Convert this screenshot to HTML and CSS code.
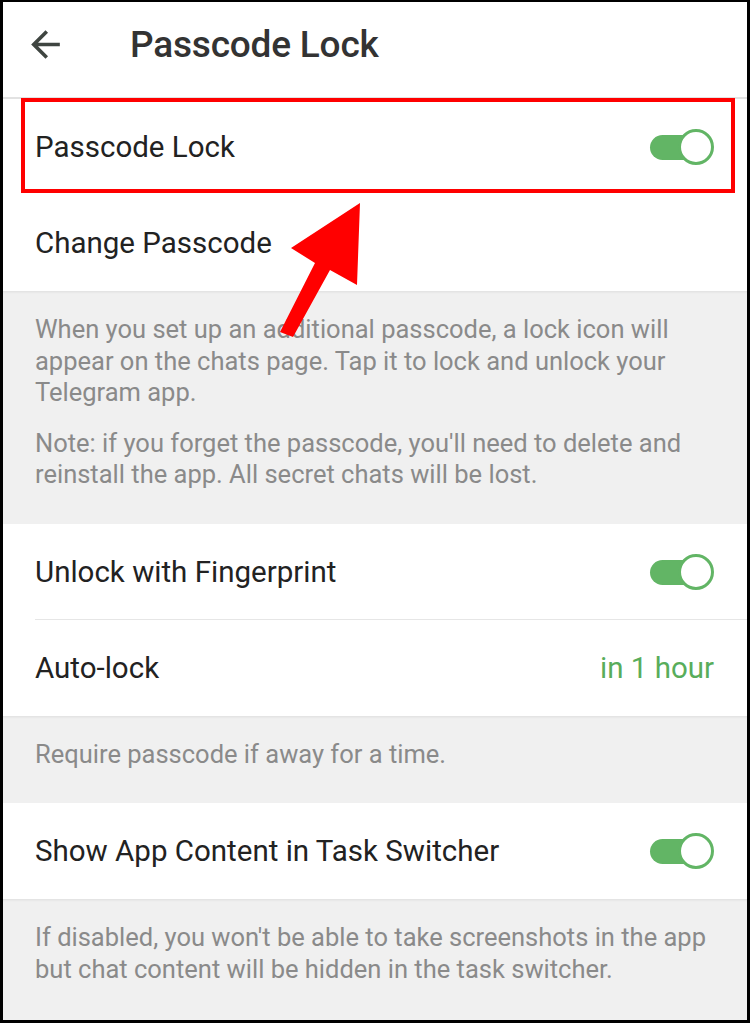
FILE: index.html
```html
<!DOCTYPE html>
<html lang="en">
<head>
    <meta charset="UTF-8">
    <meta name="viewport" content="width=device-width, initial-scale=1.0">
    <title>Passcode Lock</title>
    <link rel="stylesheet" href="styles.css">
</head>
<body>
    <div class="screen">
        <header class="app-bar">
            <button class="back-btn" aria-label="Back">
                <svg viewBox="0 0 24 24" width="43" height="43">
                    <path d="M20 11H7.83l5.59-5.59L12 4l-8 8 8 8 1.41-1.41L7.83 13H20v-2z" fill="#3f4541"/>
                </svg>
            </button>
            <h1 class="title">Passcode Lock</h1>
        </header>

        <div class="rows">
            <div class="row">
                <span class="label">Passcode Lock</span>
                <span class="switch on"></span>
            </div>
            <div class="row">
                <span class="label">Change Passcode</span>
            </div>
        </div>

        <div class="info">
            <p>When you set up an additional passcode, a lock icon will appear on the chats page. Tap it to lock and unlock your Telegram app.</p>
            <p>Note: if you forget the passcode, you'll need to delete and reinstall the app. All secret chats will be lost.</p>
        </div>

        <div class="rows">
            <div class="row divided">
                <span class="label">Unlock with Fingerprint</span>
                <span class="switch on"></span>
            </div>
            <div class="row">
                <span class="label">Auto-lock</span>
                <span class="value">in 1 hour</span>
            </div>
        </div>

        <div class="info">
            <p>Require passcode if away for a time.</p>
        </div>

        <div class="rows">
            <div class="row">
                <span class="label">Show App Content in Task Switcher</span>
                <span class="switch on"></span>
            </div>
        </div>

        <div class="info last">
            <p>If disabled, you won't be able to take screenshots in the app but chat content will be hidden in the task switcher.</p>
        </div>

        <!-- annotation overlay -->
        <div class="highlight"></div>
        <svg class="pointer" viewBox="0 0 750 1023" width="750" height="1023">
            <polygon points="280,332 315,263 291,248 360,203 357,285 330,270 293,337" fill="#ff0000"/>
        </svg>
    </div>
</body>
</html>
```

FILE: styles.css
```css
/* Base */
body {
    margin: 0;
    background-color: #000;
    font-family: Roboto, "Noto Sans", sans-serif;
}

.screen {
    position: relative;
    width: 744px;
    height: 1018px;
    margin: 2px 3px 3px 3px;
    background-color: #f0f0f0;
    overflow: hidden;
    display: flex;
    flex-direction: column;
}

/* Header */
.app-bar {
    display: flex;
    align-items: center;
    height: 84px;
    padding-bottom: 11px;
    background-color: #fff;
    border-bottom: 2px solid #e2e2e2;
    flex-shrink: 0;
}

.back-btn {
    display: flex;
    background: none;
    border: none;
    padding: 0;
    margin: 0 0 0 21px;
    width: 43px;
    height: 43px;
}

.title {
    margin: 0 0 0 63px;
    font-size: 37px;
    font-weight: 500;
    color: #333;
    letter-spacing: -0.2px;
}

/* Rows */
.rows {
    background-color: #fff;
}

.row {
    display: flex;
    align-items: center;
    justify-content: space-between;
    height: 96px;
    padding: 0 33px 0 32px;
    position: relative;
}

.row.divided::after {
    content: "";
    position: absolute;
    left: 32px;
    right: 0;
    bottom: 0;
    height: 1px;
    background-color: #e6e6e6;
}

.label {
    font-size: 29.5px;
    color: #222;
}

.value {
    font-size: 29.5px;
    color: #58ad5b;
}

/* Toggle */
.switch {
    position: relative;
    width: 64px;
    height: 36px;
}

.switch::before {
    content: "";
    position: absolute;
    left: 0;
    top: 6px;
    width: 50px;
    height: 25px;
    border-radius: 13px;
    background-color: #62b565;
}

.switch::after {
    content: "";
    position: absolute;
    right: 0;
    top: 0;
    width: 30px;
    height: 30px;
    border-radius: 50%;
    border: 3px solid #62b565;
    background-color: #fff;
}

/* Info sections */
.info {
    padding: 23px 22px 33px 32px;
    box-shadow: inset 0 3px 3px -2px rgba(0, 0, 0, 0.08);
}

.info p {
    margin: 0;
    font-size: 25.5px;
    line-height: 31.5px;
    color: #8a8a8a;
}

.info p + p {
    margin-top: 19px;
}

.info.last {
    flex: 1;
}

/* Annotation */
.highlight {
    position: absolute;
    left: 18px;
    top: 96px;
    width: 706px;
    height: 87px;
    border: 4px solid #ff0000;
}

.pointer {
    position: absolute;
    left: -3px;
    top: -2px;
    pointer-events: none;
}
```
